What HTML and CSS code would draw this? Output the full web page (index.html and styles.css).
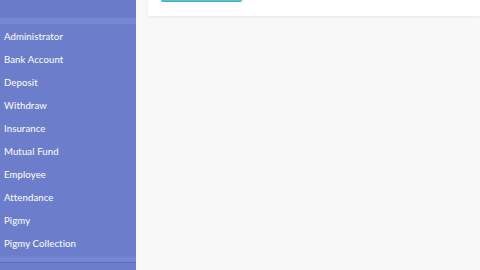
FILE: index.html
```html
<!DOCTYPE html>
<html lang="en">
<head>
    <meta charset="UTF-8">
    <meta name="viewport" content="width=device-width, initial-scale=1.0">
    <title>Bank Admin</title>
    <link rel="stylesheet" href="styles.css">
</head>
<body>
    <div class="layout">
        <aside class="sidebar">
            <div class="sidebar-top"></div>
            <ul class="menu">
                <li><a href="#">Administrator</a></li>
                <li><a href="#">Bank Account</a></li>
                <li><a href="#">Deposit</a></li>
                <li><a href="#">Withdraw</a></li>
                <li><a href="#">Insurance</a></li>
                <li><a href="#">Mutual Fund</a></li>
                <li><a href="#">Employee</a></li>
                <li><a href="#">Attendance</a></li>
                <li><a href="#">Pigmy</a></li>
                <li><a href="#">Pigmy Collection</a></li>
            </ul>
            <div class="sidebar-bottom"></div>
        </aside>

        <main class="content">
            <div class="card">
                <button class="btn-info"></button>
            </div>
        </main>
    </div>
</body>
</html>
```

FILE: styles.css
```css
* {
    margin: 0;
    padding: 0;
    box-sizing: border-box;
}

body {
    font-family: 'Lato', 'Open Sans', sans-serif;
    background: #f8f8f8;
    overflow: hidden;
}

.layout {
    display: flex;
    height: 270px;
}

.sidebar {
    width: 136px;
    flex-shrink: 0;
    background: #6c7ecb;
    display: flex;
    flex-direction: column;
}

.sidebar-top {
    height: 24px;
    background: #6a7bca;
    border-bottom: 6px solid #7787d2;
}

.menu {
    list-style: none;
    padding-top: 1px;
}

.menu li {
    height: 23px;
    display: flex;
    align-items: center;
}

.menu a {
    color: #ffffff;
    text-decoration: none;
    font-size: 9.6px;
    padding-left: 4px;
    letter-spacing: 0.1px;
}

.sidebar-bottom {
    margin-top: 2px;
    height: 6px;
    background: #7787d2;
    border-bottom: 1px solid #5c6cb8;
}

.content {
    flex: 1;
    padding-left: 12px;
}

.card {
    height: 16px;
    background: #ffffff;
    box-shadow: 0 1px 3px rgba(0,0,0,0.07);
    padding-left: 13px;
}

.btn-info {
    display: block;
    width: 81px;
    height: 2px;
    border: none;
    background: #5bc0de;
    border-bottom: 1px solid #46a9c7;
    border-radius: 0 0 2px 2px;
}
```
